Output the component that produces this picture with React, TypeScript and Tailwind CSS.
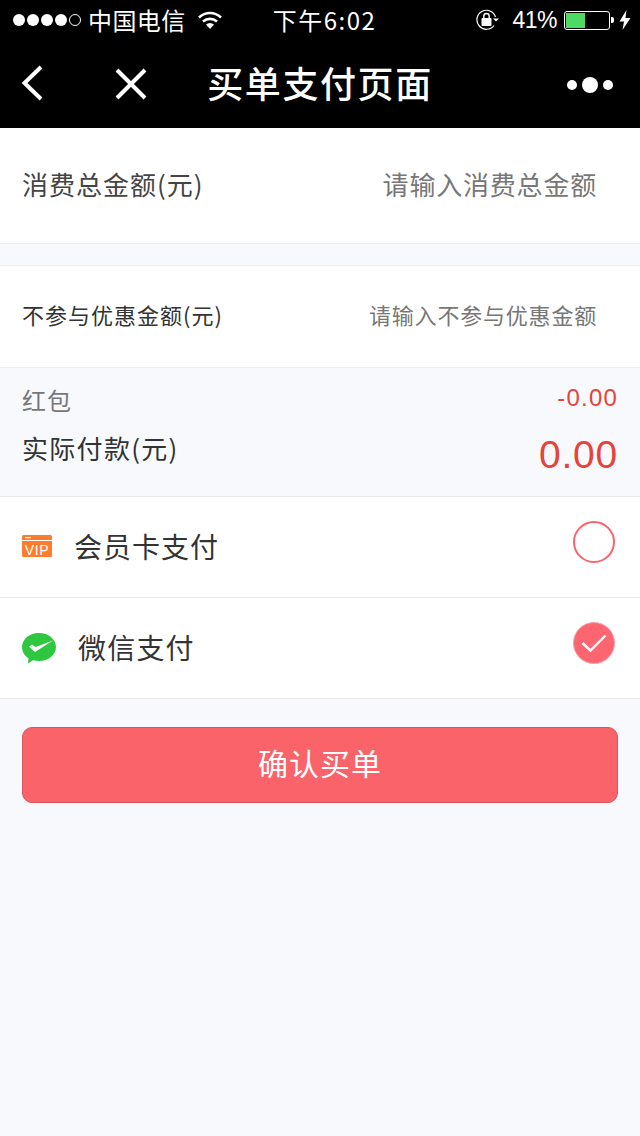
const cjk = "font-['Noto_Sans_CJK_SC','Noto_Sans',sans-serif]";

function Signal() {
  return (
    <div className="flex items-center gap-[2px]">
      {[0, 1, 2, 3].map((i) => (
        <span key={i} className="w-[12px] h-[12px] rounded-full bg-white" />
      ))}
      <span className="w-[12px] h-[12px] rounded-full border border-white" />
    </div>
  );
}

function Wifi() {
  return (
    <svg width="26" height="20" viewBox="0 0 26 20" fill="none">
      <path d="M2 7.5C8.5 1.5 17.5 1.5 24 7.5" stroke="#fff" strokeWidth="2.6" />
      <path d="M6 11.5C10 8 16 8 20 11.5" stroke="#fff" strokeWidth="2.6" />
      <path d="M9 14.5C11.5 12.5 14.5 12.5 17 14.5L13 19Z" fill="#fff" />
    </svg>
  );
}

function RotationLock() {
  return (
    <svg width="24" height="22" viewBox="0 0 24 22" fill="none">
      <path d="M19.5 8A9.5 9.5 0 1 0 18 16.5" stroke="#fff" strokeWidth="1.2" />
      <path d="M17 9.5H23L20 12.5Z" fill="#fff" />
      <rect x="5.5" y="9" width="10" height="8" rx="1" fill="#fff" />
      <path d="M7.8 9V7.2a2.7 2.7 0 0 1 5.4 0V9" stroke="#fff" strokeWidth="1.4" />
    </svg>
  );
}

function Battery() {
  return (
    <div className="flex items-center">
      <div className="w-[46px] h-[19px] rounded-[3px] border border-white p-[1px]">
        <div className="w-[19px] h-full bg-[#4cd964]" />
      </div>
      <span className="w-[3px] h-[6px] bg-white rounded-r-[2px] ml-[1px]" />
    </div>
  );
}

function Row({ label, placeholder, size, labelColor }: { label: string; placeholder: string; size: string; labelColor: string }) {
  return (
    <div className="flex items-center justify-between h-full pl-[22px] pr-[43px] pb-[4px] bg-white">
      <span className={`${size} ${labelColor} tracking-[1px]`}>{label}</span>
      <span className={`${size} text-[#777] tracking-[0.8px]`}>{placeholder}</span>
    </div>
  );
}

export default function App() {
  return (
    <div className={`w-[640px] h-[1136px] bg-[#f8f9fd] overflow-hidden ${cjk}`}>
      <header className="bg-black h-[128px] text-white">
        <div className="h-[40px] flex items-center justify-between pl-[13px] pr-[9px]">
          <div className="flex items-center w-[245px]">
            <Signal />
            <span className="text-[24px] ml-[7px] leading-none tracking-[0.4px]">中国电信</span>
            <span className="ml-[11px]"><Wifi /></span>
          </div>
          <span className="text-[24px] leading-none tracking-[1.5px]">下午6:02</span>
          <div className="flex items-center justify-end w-[240px]">
            <RotationLock />
            <span className="text-[23px] leading-none ml-[12px] mr-[7px] tracking-[-0.5px] font-['Liberation_Sans',sans-serif]">41%</span>
            <Battery />
            <svg className="ml-[5px]" width="12" height="20" viewBox="0 0 12 20"><path d="M7.5 0 0.5 11.5H5L3.5 20 11.5 8H6.5Z" fill="#fff" /></svg>
          </div>
        </div>
        <div className="relative h-[88px] flex items-center justify-center pb-[4px]">
          <svg className="absolute left-[21px] top-[24px]" width="24" height="38" viewBox="0 0 24 38" fill="none">
            <path d="M20 3 3.5 19 20 35" stroke="#fff" strokeWidth="4" />
          </svg>
          <svg className="absolute left-[114px] top-[27px]" width="34" height="34" viewBox="0 0 34 34" fill="none">
            <path d="M3 3 31 31M31 3 3 31" stroke="#fff" strokeWidth="4" />
          </svg>
          <span className="text-[36px] font-medium tracking-[1.6px] leading-none">买单支付页面</span>
          <div className="absolute right-[27px] top-[37px] flex items-center gap-[5px]">
            <span className="w-[10px] h-[10px] rounded-full bg-white" />
            <span className="w-[16px] h-[16px] rounded-full bg-white" />
            <span className="w-[10px] h-[10px] rounded-full bg-white" />
          </div>
        </div>
      </header>

      <div className="h-[116px] border-b border-[#eceef2]">
        <Row label="消费总金额(元)" placeholder="请输入消费总金额" size="text-[26px]" labelColor="text-[#444]" />
      </div>
      <div className="h-[21px]" />
      <div className="h-[103px] border-y border-[#eceef2]">
        <Row label="不参与优惠金额(元)" placeholder="请输入不参与优惠金额" size="text-[22px]" labelColor="text-[#333]" />
      </div>

      <div className="h-[129px] border-b border-[#e8e8e8] pl-[22px] pr-[22px]">
        <div className="flex justify-between items-start pt-[14px]">
          <span className="text-[24px] leading-[36px] text-[#777] tracking-[1px]">红包</span>
          <span className="text-[24px] leading-[32px] text-[#e6433a] tracking-[1.2px] font-['Liberation_Sans',sans-serif]">-0.00</span>
        </div>
        <div className="flex justify-between items-start mt-[10px]">
          <span className="text-[26px] leading-[40px] text-[#333] tracking-[1.3px]">实际付款(元)</span>
          <span className="text-[39px] leading-[48px] mt-[3px] text-[#e6433a] tracking-[0.8px] font-['Liberation_Sans',sans-serif]">0.00</span>
        </div>
      </div>

      <div className="h-[101px] bg-white border-b border-[#e8e8e8] flex items-center pl-[22px] pr-[25px]">
        <svg className="mb-[2px]" width="30" height="22" viewBox="0 0 30 22">
          <path d="M1.5 0H28.5A1.5 1.5 0 0 1 30 1.5V5H0V1.5A1.5 1.5 0 0 1 1.5 0Z" fill="#fe7d2d" />
          <path d="M0 6H30V20.5A1.5 1.5 0 0 1 28.5 22H1.5A1.5 1.5 0 0 1 0 20.5Z" fill="#fe7d2d" />
          <rect x="3" y="2" width="6" height="1.2" fill="#fff" />
          <text x="15" y="19.5" textAnchor="middle" fontSize="14" letterSpacing="0.6" fill="#fff" fontFamily="Liberation Sans">VIP</text>
        </svg>
        <span className="ml-[22px] mb-[2px] text-[28px] text-[#333] tracking-[1px]">会员卡支付</span>
        <span className="ml-auto w-[42px] h-[42px] rounded-full border-2 border-[#f9636b] mb-[10px]" />
      </div>

      <div className="h-[101px] bg-white border-b border-[#e8e8e8] flex items-center pl-[22px] pr-[25px]">
        <svg width="34" height="31" viewBox="0 0 34 31">
          <path d="M17 0C26.4 0 34 6.2 34 14S26.4 28 17 28C15 28 13 27.7 11.2 27.2L6 30.5 6.5 25.3C2.5 22.7 0 18.6 0 14 0 6.2 7.6 0 17 0Z" fill="#2dc83f" />
          <path d="M7 13.5 10 11.5 13.5 14 31 7.5 13 19Z" fill="#fff" />
        </svg>
        <span className="ml-[22px] mb-[2px] text-[28px] text-[#333] tracking-[1.2px]">微信支付</span>
        <span className="ml-auto w-[42px] h-[42px] rounded-full bg-[#fd6671] border border-[#f9a0a6] flex items-center justify-center mb-[10px]">
          <svg width="26" height="20" viewBox="0 0 26 20" fill="none">
            <path d="M1.5 10 9.5 17.5 24.5 2.5" stroke="#fff" strokeWidth="2.4" />
          </svg>
        </span>
      </div>

      <div className="px-[22px] pt-[28px]">
        <button className="w-full h-[76px] pb-[6px] bg-[#f96369] border border-[#d8565c] rounded-[10px] text-white text-[30px] tracking-[1px]">
          确认买单
        </button>
      </div>
    </div>
  );
}
